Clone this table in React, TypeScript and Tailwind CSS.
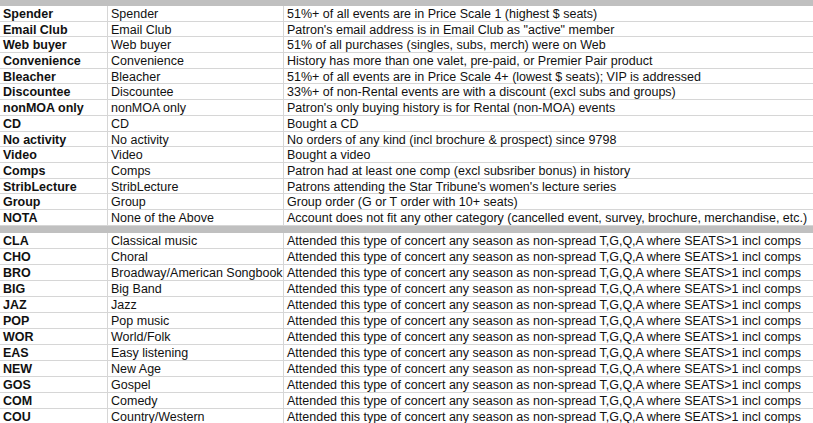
import React from 'react';

type Row = [string, string, string];

const segments: Row[] = [
  ['Spender', 'Spender', '51%+ of all events are in Price Scale 1 (highest $ seats)'],
  ['Email Club', 'Email Club', 'Patron\'s email address is in Email Club as "active" member'],
  ['Web buyer', 'Web buyer', '51% of all purchases (singles, subs, merch) were on Web'],
  ['Convenience', 'Convenience', 'History has more than one valet, pre-paid, or Premier Pair product'],
  ['Bleacher', 'Bleacher', '51%+ of all events are in Price Scale 4+ (lowest $ seats); VIP is addressed'],
  ['Discountee', 'Discountee', '33%+ of non-Rental events are with a discount (excl subs and groups)'],
  ['nonMOA only', 'nonMOA only', "Patron's only buying history is for Rental (non-MOA) events"],
  ['CD', 'CD', 'Bought a CD'],
  ['No activity', 'No activity', 'No orders of any kind (incl brochure & prospect) since 9798'],
  ['Video', 'Video', 'Bought a video'],
  ['Comps', 'Comps', 'Patron had at least one comp (excl subsriber bonus) in history'],
  ['StribLecture', 'StribLecture', "Patrons attending the Star Tribune's women's lecture series"],
  ['Group', 'Group', 'Group order (G or T order with 10+ seats)'],
  ['NOTA', 'None of the Above', 'Account does not fit any other category (cancelled event, survey, brochure, merchandise, etc.)'],
];

const concert = 'Attended this type of concert any season as non-spread T,G,Q,A where SEATS>1 incl comps';

const genres: Row[] = [
  ['CLA', 'Classical music', concert],
  ['CHO', 'Choral', concert],
  ['BRO', 'Broadway/American Songbook', concert],
  ['BIG', 'Big Band', concert],
  ['JAZ', 'Jazz', concert],
  ['POP', 'Pop music', concert],
  ['WOR', 'World/Folk', concert],
  ['EAS', 'Easy listening', concert],
  ['NEW', 'New Age', concert],
  ['GOS', 'Gospel', concert],
  ['COM', 'Comedy', concert],
  ['COU', 'Country/Western', concert],
];

function Rows({ rows, tall }: { rows: Row[]; tall?: boolean }) {
  return (
    <>
      {rows.map(([code, name, desc]) => (
        <div
          key={code}
          className={`grid grid-cols-[108px_176px_1fr] border-b border-[#d6d6d6] leading-[16px] ${tall ? 'h-[16px]' : 'h-[15.7px]'}`}
        >
          <div className="pl-[3px] font-bold border-r border-[#d6d6d6] whitespace-nowrap">{code}</div>
          <div className="pl-[3px] border-r border-[#d6d6d6] whitespace-nowrap">{name}</div>
          <div className="pl-[3px] whitespace-nowrap">{desc}</div>
        </div>
      ))}
    </>
  );
}

export default function App() {
  return (
    <div className="w-[813px] h-[423px] overflow-hidden bg-white text-[12.5px] text-[#111] font-['Liberation_Sans',Arial,sans-serif]">
      <div className="h-[6px] bg-[#c0c0c0]" />
      <Rows rows={segments} />
      <div className="h-[7px] bg-[#c0c0c0]" />
      <Rows rows={genres} tall />
    </div>
  );
}
